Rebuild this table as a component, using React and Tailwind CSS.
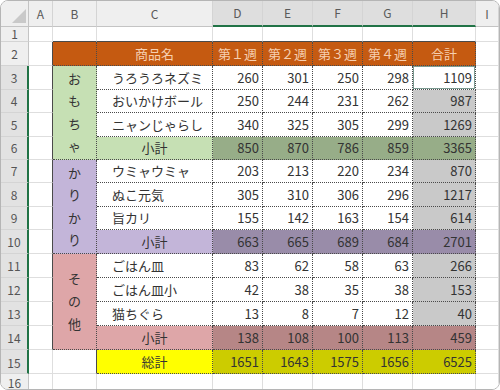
import React from "react";

const COLS = ["A", "B", "C", "D", "E", "F", "G", "H", "I"];

const groups = [
  {
    label: ["お", "も", "ち", "ゃ"],
    light: "bg-[#c6e0b4]",
    dark: "bg-[#97ad88]",
    items: [
      ["うろうろネズミ", 260, 301, 250, 298, 1109],
      ["おいかけボール", 250, 244, 231, 262, 987],
      ["ニャンじゃらし", 340, 325, 305, 299, 1269],
    ],
    sub: [850, 870, 786, 859, 3365],
  },
  {
    label: ["か", "り", "か", "り"],
    light: "bg-[#c3b5d9]",
    dark: "bg-[#998ca9]",
    items: [
      ["ウミャウミャ", 203, 213, 220, 234, 870],
      ["ぬこ元気", 305, 310, 306, 296, 1217],
      ["旨カリ", 155, 142, 163, 154, 614],
    ],
    sub: [663, 665, 689, 684, 2701],
  },
  {
    label: ["そ", "の", "他"],
    light: "bg-[#dea6a8]",
    dark: "bg-[#b68686]",
    items: [
      ["ごはん皿", 83, 62, 58, 63, 266],
      ["ごはん皿小", 42, 38, 35, 38, 153],
      ["猫ちぐら", 13, 8, 7, 12, 40],
    ],
    sub: [138, 108, 100, 113, 459],
  },
];

const dot = "border-r border-b border-dotted border-[#4a4a4a]";
const grid = "border-r border-b border-[#dedede]";

function ColHead({ letter }) {
  const sel = ["D", "E", "F", "G", "H"].includes(letter);
  return (
    <div
      className={
        "flex items-center justify-center text-[12px] text-[#5a5a5a] border-r border-[#d4d4d4] " +
        (sel
          ? "bg-[#dedede] border-b-2 border-b-[#217346]"
          : "bg-[#efefef] border-b border-b-[#c4c4c4]")
      }
    >
      {letter}
    </div>
  );
}

function RowHead({ n, last }) {
  const sel = n >= 3 && n <= 15;
  return (
    <div
      className={
        "flex justify-center text-[12px] text-[#555] border-b border-[#d4d4d4] " +
        (n === 15 || n === 16 ? "items-end pb-[1px] " : "items-center ") +
        (sel
          ? "bg-[#e2e2e2] border-r-2 border-r-[#217346]"
          : "bg-[#efefef] border-r border-r-[#c4c4c4]")
      }
    >
      {n}
    </div>
  );
}

function Blank({ edgeR, edgeB }) {
  return (
    <div
      className={
        "bg-white border-r border-b " +
        (edgeR ? "border-r-dotted border-r-[#4a4a4a] " : "border-r-[#dedede] ") +
        (edgeB ? "border-b-dotted border-b-[#4a4a4a]" : "border-b-[#dedede]")
      }
    />
  );
}

function Num({ v, bg }) {
  return (
    <div className={"flex items-center justify-end pr-[3px] text-[13px] text-[#333] " + dot + " " + bg}>
      {v}
    </div>
  );
}

export default function App() {
  const cells = [];
  let k = 0;
  const push = (el) => cells.push(React.cloneElement(el, { key: k++ }));

  // header row
  push(
    <div className="bg-[#efefef] border-r border-b border-[#c4c4c4] flex items-end justify-end pr-[2px] pb-[3px]">
      <svg width="14" height="14" viewBox="0 0 14 14">
        <polygon points="14,0 14,14 0,14" fill="#c9c9c9" />
      </svg>
    </div>
  );
  COLS.forEach((c) => push(<ColHead letter={c} />));

  // row 1
  push(<RowHead n={1} />);
  COLS.forEach((c) => {
    const inTable = ["B", "C", "D", "E", "F", "G", "H"].includes(c);
    push(<Blank edgeB={inTable} />);
  });

  // row 2: header
  push(<RowHead n={2} />);
  push(<Blank edgeR />);
  push(<div className={"bg-[#c55a11] " + dot} />);
  ["商品名", "第１週", "第２週", "第３週", "第４週", "合計"].forEach((h) =>
    push(
      <div className={"bg-[#c55a11] flex items-center justify-center text-[13px] text-[#f6cfb0] " + dot}>
        {h}
      </div>
    )
  );
  push(<Blank />);

  let row = 3;
  groups.forEach((g) => {
    g.items.forEach((it, i) => {
      push(<RowHead n={row} />);
      push(<Blank edgeR />);
      if (i === 0) {
        push(
          <div
            className={
              "row-span-4 flex flex-col items-center justify-center text-[13px] leading-[22.5px] text-[#333] " +
              dot +
              " " +
              g.light
            }
          >
            {g.label.map((ch, j) => (
              <span key={j}>{ch}</span>
            ))}
          </div>
        );
      }
      push(
        <div className={"bg-white flex items-center pl-[15px] text-[13px] text-[#333] whitespace-nowrap " + dot}>
          {it[0]}
        </div>
      );
      it.slice(1, 5).forEach((v) => push(<Num v={v} bg="bg-white" />));
      if (row === 3) {
        push(
          <div
            className={
              "bg-white flex items-center justify-end pr-[3px] text-[13px] text-[#333] shadow-[inset_0_0_0_1px_#7d9c92] " +
              dot
            }
          >
            {it[5]}
          </div>
        );
      } else {
        push(<Num v={it[5]} bg="bg-[#c9c9c9]" />);
      }
      push(<Blank />);
      row++;
    });
    // subtotal
    push(<RowHead n={row} />);
    push(<Blank edgeR />);
    push(
      <div className={"flex items-center justify-center text-[13px] text-[#333] " + dot + " " + g.light}>
        小計
      </div>
    );
    g.sub.forEach((v) => push(<Num v={v} bg={g.dark} />));
    push(<Blank />);
    row++;
  });

  // row 15
  push(<RowHead n={15} />);
  push(<Blank />);
  push(<Blank edgeR />);
  push(
    <div className={"bg-[#ffff00] flex items-center justify-center text-[13px] text-[#333] " + dot}>総計</div>
  );
  [1651, 1643, 1575, 1656, 6525].forEach((v) => push(<Num v={v} bg="bg-[#cccc00]" />));
  push(<Blank />);

  // row 16
  push(<RowHead n={16} />);
  COLS.forEach(() => push(<Blank />));

  return (
    <div className="w-[500px] h-[390px] bg-white font-['Noto_Sans_CJK_JP','Noto_Sans',sans-serif]">
      <div className="w-[500px] h-[390px] border border-[#b5b5b5] rounded-[8px] overflow-hidden">
        <div className="grid grid-cols-[28px_24px_44px_116px_50px_50px_50px_50px_63px_1fr] grid-rows-[26px_15px_24px_24px_23px_24px_23px_23px_24px_23px_24px_24px_24px_24px_24px_24px_1fr] h-full">
          {cells}
        </div>
      </div>
    </div>
  );
}
